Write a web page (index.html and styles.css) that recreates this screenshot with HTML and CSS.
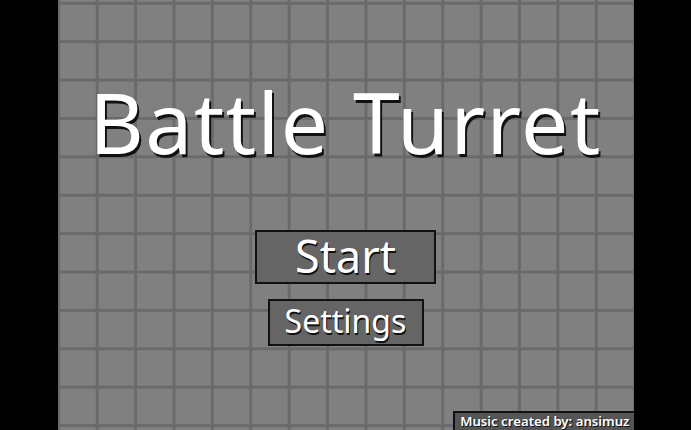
FILE: index.html
```html
<!DOCTYPE html>
<html>
<head>
<title>Battle Turret</title>
<link rel="stylesheet" href="styles.css">
</head>
<body>

<div class="game">
  <h1 class="title">Battle Turret</h1>
  <div class="menu">
    <button class="btn btn-start">Start</button>
    <button class="btn btn-settings">Settings</button>
  </div>
  <div class="credit">Music created by: ansimuz</div>
</div>

</body>
</html>
```
FILE: styles.css
```css
html, body {
  margin: 0;
  height: 100%;
  background-color: #000;
  overflow: hidden;
}

body {
  font-family: "Noto Sans", "Open Sans", sans-serif;
}

.game {
  width: 576px;
  height: 430px;
  margin: 0 auto;
  display: flex;
  flex-direction: column;
  align-items: center;
  background-color: #808080;
  background-image:
    linear-gradient(to right, #6a6a6a 3px, transparent 3px),
    linear-gradient(to bottom, #6a6a6a 3px, transparent 3px);
  background-size: 38.4px 38.4px;
  background-position: -0.7px 1.8px;
}

.title {
  margin: 80px 0 0;
  font-size: 84px;
  font-weight: normal;
  line-height: 1;
  letter-spacing: 1.5px;
  color: #fff;
  text-shadow: 2px 3px 0 #111;
}

.menu {
  margin-top: 66px;
  display: flex;
  flex-direction: column;
  align-items: center;
  gap: 15px;
}

.btn {
  box-sizing: border-box;
  padding: 0 0 3px;
  border: 2px solid #111;
  background-color: #656565;
  color: #fff;
  font-family: inherit;
  text-shadow: 1px 2px 0 #111;
  cursor: pointer;
}

.btn-start {
  width: 181px;
  height: 54px;
  font-size: 45px;
  line-height: 1;
}

.btn-settings {
  width: 156px;
  height: 47px;
  font-size: 32px;
  line-height: 1;
}

.credit {
  margin-top: auto;
  align-self: flex-end;
  padding: 0 4px 0 5px;
  border: 2px solid #111;
  border-right: none;
  border-bottom: none;
  background-color: #555;
  color: #fff;
  font-size: 13.2px;
  font-weight: 600;
  line-height: 17px;
  text-shadow: 1px 1px 0 #111;
}
```
